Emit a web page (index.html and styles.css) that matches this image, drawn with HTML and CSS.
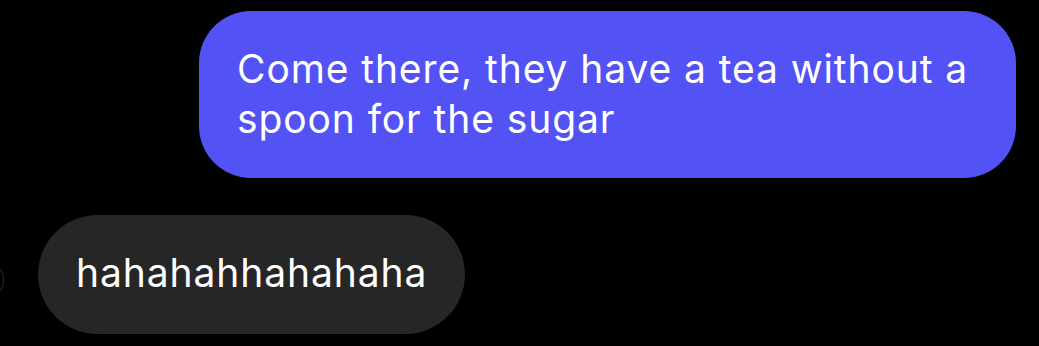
FILE: index.html
```html
<!DOCTYPE html>
<html lang="en">
<head>
    <meta charset="UTF-8">
    <meta name="viewport" content="width=device-width, initial-scale=1.0">
    <title>Chat</title>
    <link rel="stylesheet" href="styles.css">
</head>
<body>
    <div class="chat">
        <div class="row outgoing">
            <div class="bubble sent">Come there, they have a tea without a<br>spoon for the sugar</div>
        </div>
        <div class="row incoming">
            <div class="avatar"></div>
            <div class="bubble received">hahahahhahahaha</div>
        </div>
    </div>
</body>
</html>
```

FILE: styles.css
```css
body {
    margin: 0;
    background-color: #000;
    font-family: Inter, "Noto Sans", sans-serif;
    color: #fff;
    overflow: hidden;
}

.chat {
    display: flex;
    flex-direction: column;
    gap: 37px;
    padding: 11px 23px 0 0;
}

.row {
    display: flex;
    align-items: center;
}

.outgoing {
    justify-content: flex-end;
}

.incoming {
    gap: 34px;
    margin-left: -36px;
}

.avatar {
    width: 40px;
    height: 40px;
    box-sizing: border-box;
    border: 1px solid #2c2c2c;
    border-radius: 50%;
    margin-top: 10px;
}

.bubble {
    font-size: 39px;
    line-height: 46px;
    letter-spacing: 0.9px;
}

.sent {
    background-color: #5352f4;
    border-radius: 52px;
    line-height: 50px;
    padding: 33px 48px 34px 38px;
}

.received {
    background-color: #262626;
    border-radius: 60px;
    padding: 35px 38px 38px 38px;
}
```
